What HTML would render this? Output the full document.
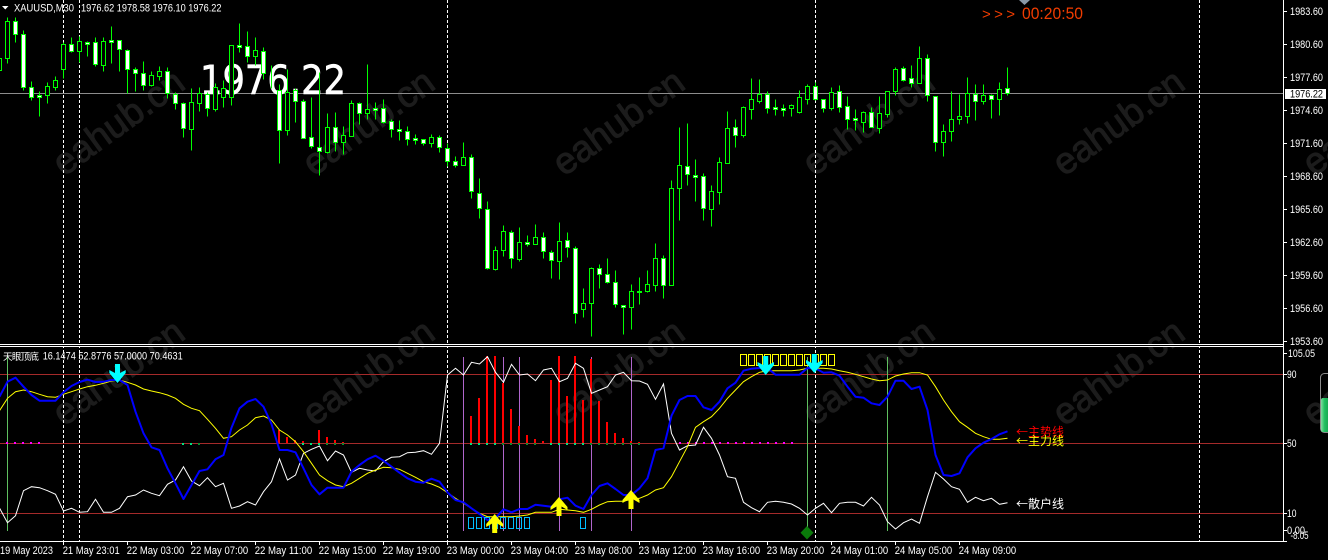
<!DOCTYPE html>
<html><head><meta charset="utf-8"><style>
html,body{margin:0;padding:0;background:#000;width:1328px;height:560px;overflow:hidden}
svg{display:block}
text{font-family:"Liberation Sans","Noto Sans CJK SC",sans-serif;fill:#fff;font-size:11px}
.wm text{font-size:37px;fill:#1c1c1c;stroke:#1c1c1c;stroke-width:1px}
.cjk{font-family:"WenQuanYi Zen Hei","Noto Sans CJK SC",sans-serif;font-size:12px}
</style></head><body>
<svg width="1328" height="560" viewBox="0 0 1328 560" xmlns="http://www.w3.org/2000/svg">
<rect width="1328" height="560" fill="#000"/>
<g class="wm">
<text transform="translate(64,177) rotate(-36)">eahub.cn</text>
<text transform="translate(314,177) rotate(-36)">eahub.cn</text>
<text transform="translate(564,177) rotate(-36)">eahub.cn</text>
<text transform="translate(814,177) rotate(-36)">eahub.cn</text>
<text transform="translate(1064,177) rotate(-36)">eahub.cn</text>
<text transform="translate(1314,177) rotate(-36)">eahub.cn</text>
<text transform="translate(64,427) rotate(-36)">eahub.cn</text>
<text transform="translate(314,427) rotate(-36)">eahub.cn</text>
<text transform="translate(564,427) rotate(-36)">eahub.cn</text>
<text transform="translate(814,427) rotate(-36)">eahub.cn</text>
<text transform="translate(1064,427) rotate(-36)">eahub.cn</text>
<text transform="translate(1314,427) rotate(-36)">eahub.cn</text>
</g>
<!-- grid -->
<path d="M63.5 0V541M79.5 0V541M447.5 0V541M815.5 0V541M1199.5 0V541" stroke="#fff" stroke-width="1" stroke-dasharray="3 2" shape-rendering="crispEdges" fill="none"/>
<path d="M0 93.5H1284" stroke="#8c8c8c" shape-rendering="crispEdges"/>
<text x="200" y="94" textLength="146" lengthAdjust="spacingAndGlyphs" style="font-family:'DejaVu Sans',sans-serif;font-size:40px;stroke:#fff;stroke-width:.6px">1976.22</text>
<!-- candles -->
<g transform="translate(0,.5)" shape-rendering="crispEdges">
<path fill="none" stroke="#0f0" d="M7.5 17V63M15.5 17V42M23.5 30V90M31.5 81V100M39.5 91V116M47.5 82V103M55.5 76V90M63.5 42V78M71.5 37V52M79.5 36V62M87.5 41V56M95.5 37V66M103.5 37V71M111.5 26V63M119.5 40V71M127.5 49V93M135.5 67V91M143.5 61V90M151.5 71V86M159.5 66V80M167.5 67V98M175.5 92V109M183.5 102V137M191.5 88V150M199.5 87V111M207.5 92V116M215.5 83V111M223.5 80V107M231.5 45V105M239.5 23V52M247.5 31V62M255.5 37V65M263.5 47V79M271.5 65V88M279.5 84V163M287.5 69V135M295.5 88V122M303.5 99V138M311.5 97V148M319.5 72V175M327.5 113V153M335.5 112V151M343.5 126V154M351.5 100V136M359.5 102V124M367.5 64V119M375.5 102V119M383.5 99V123M391.5 119V137M399.5 120V140M407.5 126V145M415.5 134V144M423.5 139V145M431.5 134V147M439.5 135V152M447.5 143V166M455.5 156V167M463.5 142V165M471.5 154V198M479.5 178V218M487.5 201V269M495.5 246V270M503.5 225V256M511.5 230V268M519.5 227V261M527.5 235V246M535.5 224V244M543.5 232V258M551.5 250V278M559.5 222V279M567.5 232V257M575.5 246V323M583.5 288V317M591.5 267V336M599.5 264V288M607.5 258V283M615.5 270V307M623.5 305V334M631.5 284V329M639.5 277V304M647.5 270V292M655.5 243V291M663.5 255V298M671.5 180V285M679.5 127V220M687.5 123V185M695.5 159V201M703.5 173V220M711.5 185V226M719.5 157V204M727.5 111V163M735.5 119V147M743.5 106V137M751.5 78V119M759.5 79V103M767.5 91V113M775.5 99V115M783.5 104V116M791.5 104V116M799.5 90V113M807.5 84V104M815.5 82V100M823.5 99V112M831.5 87V110M839.5 85V112M847.5 96V129M855.5 109V130M863.5 111V132M871.5 107V127M879.5 96V133M887.5 91V117M895.5 67V95M903.5 66V81M911.5 65V87M919.5 46V83M927.5 54V101M935.5 96V151M943.5 124V156M951.5 91V141M959.5 94V124M967.5 77V123M975.5 84V120M983.5 84V104M991.5 94V118M999.5 82V115M1007.5 67V95"/>
<path fill="#000" stroke="#0f0" d="M-2.5 58h4V70h-4zM5.5 21h4V58h-4zM45.5 86h4V95h-4zM53.5 80h4V87h-4zM61.5 44h4V69h-4zM77.5 41h4V51h-4zM101.5 41h4V65h-4zM149.5 75h4V85h-4zM157.5 71h4V76h-4zM189.5 102h4V129h-4zM197.5 93h4V103h-4zM213.5 87h4V109h-4zM221.5 88h4V97h-4zM229.5 45h4V97h-4zM253.5 50h4V56h-4zM285.5 92h4V130h-4zM325.5 127h4V152h-4zM341.5 135h4V142h-4zM349.5 103h4V136h-4zM365.5 109h4V113h-4zM429.5 137h4V143h-4zM461.5 157h4V165h-4zM493.5 250h4V269h-4zM501.5 231h4V250h-4zM517.5 242h4V259h-4zM533.5 237h4V244h-4zM557.5 241h4V261h-4zM581.5 303h4V309h-4zM589.5 268h4V303h-4zM629.5 291h4V307h-4zM645.5 284h4V291h-4zM653.5 258h4V285h-4zM669.5 188h4V285h-4zM677.5 165h4V188h-4zM709.5 191h4V209h-4zM717.5 162h4V192h-4zM725.5 128h4V163h-4zM741.5 107h4V135h-4zM749.5 99h4V109h-4zM757.5 94h4V101h-4zM789.5 105h4V108h-4zM797.5 97h4V112h-4zM805.5 86h4V99h-4zM829.5 92h4V108h-4zM861.5 112h4V122h-4zM877.5 113h4V128h-4zM885.5 91h4V114h-4zM893.5 69h4V91h-4zM917.5 58h4V83h-4zM941.5 131h4V142h-4zM949.5 119h4V131h-4zM957.5 116h4V119h-4zM965.5 93h4V116h-4zM981.5 95h4V101h-4zM997.5 89h4V99h-4z"/>
<path fill="#fff" stroke="#0f0" d="M13.5 21h4V34h-4zM21.5 34h4V87h-4zM29.5 87h4V97h-4zM37.5 95h4V97h-4zM69.5 44h4V51h-4zM85.5 42h4V44h-4zM93.5 42h4V64h-4zM109.5 40h4V42h-4zM117.5 40h4V49h-4zM125.5 50h4V69h-4zM133.5 69h4V73h-4zM141.5 73h4V85h-4zM165.5 71h4V93h-4zM173.5 94h4V103h-4zM181.5 103h4V128h-4zM205.5 94h4V108h-4zM237.5 45h4V47h-4zM245.5 46h4V56h-4zM261.5 51h4V73h-4zM277.5 90h4V130h-4zM293.5 90h4V101h-4zM301.5 101h4V138h-4zM309.5 137h4V146h-4zM317.5 147h4V151h-4zM333.5 127h4V142h-4zM357.5 103h4V113h-4zM373.5 108h4V110h-4zM381.5 108h4V122h-4zM389.5 121h4V129h-4zM397.5 129h4V131h-4zM405.5 131h4V139h-4zM413.5 138h4V140h-4zM421.5 139h4V143h-4zM437.5 137h4V147h-4zM445.5 148h4V161h-4zM453.5 161h4V165h-4zM469.5 157h4V191h-4zM477.5 193h4V208h-4zM485.5 209h4V268h-4zM509.5 232h4V258h-4zM525.5 242h4V244h-4zM541.5 237h4V251h-4zM549.5 252h4V260h-4zM565.5 240h4V247h-4zM573.5 248h4V313h-4zM597.5 268h4V274h-4zM605.5 274h4V282h-4zM613.5 282h4V304h-4zM621.5 305h4V307h-4zM637.5 291h4V292h-4zM661.5 258h4V285h-4zM685.5 166h4V174h-4zM693.5 175h4V177h-4zM701.5 176h4V208h-4zM733.5 127h4V135h-4zM765.5 94h4V108h-4zM773.5 107h4V109h-4zM781.5 108h4V110h-4zM813.5 86h4V99h-4zM821.5 99h4V108h-4zM837.5 91h4V107h-4zM845.5 106h4V119h-4zM853.5 118h4V120h-4zM869.5 112h4V127h-4zM901.5 68h4V80h-4zM909.5 78h4V83h-4zM925.5 58h4V95h-4zM933.5 96h4V142h-4zM973.5 94h4V101h-4zM989.5 95h4V99h-4zM1005.5 88h4V93h-4z"/>
</g>
<!-- indicator base -->
<rect x="0" y="345" width="1284" height="1" fill="#000"/>
<path d="M0 374.5H1284M0 443.5H1284M0 513.5H1284" stroke="#a52a2a" shape-rendering="crispEdges"/>
<path d="M463.5 357V531M503.5 357V531M519.5 357V531M559.5 357V531M591.5 357V531M631.5 357V531" stroke="#b066cc" shape-rendering="crispEdges"/>
<path d="M7.5 357V531M807.5 357V531M887.5 357V531" stroke="#5fc05f" shape-rendering="crispEdges"/>
<!-- histogram -->
<g fill="#f00" shape-rendering="crispEdges">
<rect x="278" y="430" width="2" height="13"/><rect x="286" y="437" width="2" height="6"/><rect x="294" y="440" width="2" height="3"/><rect x="302" y="441" width="2" height="2"/><rect x="318" y="430" width="2" height="13"/><rect x="326" y="437" width="2" height="6"/><rect x="334" y="440" width="2" height="3"/><rect x="342" y="442" width="2" height="1"/>
<rect x="470" y="416" width="2" height="27"/><rect x="478" y="398" width="2" height="45"/><rect x="486" y="356" width="2" height="87"/><rect x="494" y="356" width="2" height="87"/><rect x="502" y="383" width="2" height="60"/><rect x="510" y="409" width="2" height="34"/><rect x="518" y="426" width="2" height="17"/><rect x="526" y="435" width="2" height="8"/><rect x="534" y="439" width="2" height="4"/><rect x="542" y="441" width="2" height="2"/><rect x="550" y="380" width="2" height="63"/><rect x="558" y="356" width="2" height="87"/><rect x="566" y="396" width="2" height="47"/><rect x="574" y="356" width="2" height="87"/><rect x="582" y="400" width="2" height="43"/><rect x="590" y="359" width="2" height="84"/><rect x="598" y="401" width="2" height="42"/><rect x="606" y="422" width="2" height="21"/><rect x="614" y="433" width="2" height="10"/><rect x="622" y="438" width="2" height="5"/><rect x="630" y="441" width="2" height="2"/><rect x="638" y="442" width="2" height="1"/>
</g>
<!-- dots -->
<path d="M6 443h2M14 443h2M22 443h2M30 443h2M38 443h2M679 443h2M687 443h2M695 443h2M703 443h2M711 443h2M719 443h2M727 443h2M735 443h2M743 443h2M751 443h2M759 443h2M767 443h2M775 443h2M783 443h2M791 443h2" stroke="#f0f" stroke-width="2" shape-rendering="crispEdges"/>
<path d="M182 444h2M190 444h2M302 444h2M310 444h2M318 444h2M470 444h2M478 444h2M486 444h2M494 444h2M550 444h2M558 444h2M566 444h2M574 444h2M582 444h2" stroke="#00e080" stroke-width="2" shape-rendering="crispEdges"/>
<path d="M198 444h2M326 444h2M334 444h2M342 444h2M502 444h2M510 444h2M518 444h2M526 444h2M534 444h2M590 444h2M598 444h2M606 444h2M614 444h2M622 444h2M630 444h2M638 444h2" stroke="#0a8a30" stroke-width="2" shape-rendering="crispEdges"/>
<!-- white line -->
<polyline fill="none" stroke="#fff" stroke-width="1" points="-0.5,508 7.5,522.7 15.5,515.7 23.5,490.7 31.5,486.7 39.5,487.7 47.5,490.7 55.5,494.3 63.5,511 71.5,508.3 79.5,512.3 87.5,511.7 95.5,499.3 103.5,512.3 111.5,512.3 119.5,508.3 127.5,496.7 135.5,495 143.5,490 151.5,493.3 159.5,495.7 167.5,484.3 175.5,480 183.5,466.7 191.5,481 199.5,485.7 207.5,477.7 215.5,486.7 223.5,483.3 231.5,508.3 239.5,506 247.5,501.7 255.5,505 263.5,491.7 271.5,481.7 279.5,459 287.5,480 295.5,475 303.5,453.3 311.5,449.3 319.5,446 327.5,460.7 335.5,451 343.5,455 351.5,472.3 359.5,468.3 367.5,470 375.5,471 383.5,461.7 391.5,457.3 399.5,456.7 407.5,452.7 415.5,452.3 423.5,450.7 431.5,454.3 439.5,443.3 447.5,375 455.5,368.3 463.5,375 471.5,362.3 479.5,364 487.5,356.7 495.5,372.3 503.5,382.3 511.5,364.3 519.5,375 527.5,374 535.5,380.7 543.5,370 551.5,368.3 559.5,381.7 567.5,378.3 575.5,363.3 583.5,368.3 591.5,393.3 599.5,390 607.5,386.7 615.5,375 623.5,372.3 631.5,380.7 639.5,381 647.5,384.3 655.5,399.3 663.5,384 671.5,433.3 679.5,450 687.5,445.7 695.5,445 703.5,427.3 711.5,438.3 719.5,455 727.5,476.7 735.5,478.3 743.5,502.3 751.5,507.7 759.5,511.7 767.5,502.3 775.5,501.3 783.5,502.3 791.5,504 799.5,508.3 807.5,515 815.5,508.3 823.5,503.3 831.5,512.7 839.5,503.3 847.5,502.3 855.5,502.3 863.5,506 871.5,497.3 879.5,505 887.5,521.7 895.5,529 903.5,522.7 911.5,519 919.5,523.3 927.5,496.7 935.5,472.3 943.5,479 951.5,486.7 959.5,489.3 967.5,502.3 975.5,497.3 983.5,500.7 991.5,498.3 999.5,504.3 1007.5,502.7"/>
<!-- yellow line -->
<polyline fill="none" stroke="#ff0" stroke-width="1" points="-0.5,410.7 7.5,398.3 15.5,391.7 23.5,390 31.5,391.7 39.5,394.3 47.5,396.7 55.5,397.3 63.5,394.3 71.5,391.7 79.5,389 87.5,386.7 95.5,385.3 103.5,383.3 111.5,381 119.5,380 127.5,382.3 135.5,385 143.5,389 151.5,391 159.5,392.7 167.5,395 175.5,398.3 183.5,404.3 191.5,408.3 199.5,410.7 207.5,419.3 215.5,428.3 223.5,438.3 231.5,436.7 239.5,430 247.5,425 255.5,417.7 263.5,416 271.5,420 279.5,430 287.5,435 295.5,441.7 303.5,451.7 311.5,463.3 319.5,475 327.5,480.7 335.5,485 343.5,486.7 351.5,483.3 359.5,478.3 367.5,473.3 375.5,470 383.5,467.3 391.5,467.7 399.5,469.3 407.5,473.3 415.5,477.3 423.5,481.7 431.5,484 439.5,487.3 447.5,492.7 455.5,498.3 463.5,503.3 471.5,508.3 479.5,513.3 487.5,516.7 495.5,516.7 503.5,516.7 511.5,516.7 519.5,516 527.5,515 535.5,512.3 543.5,512.3 551.5,512.3 559.5,509.3 567.5,510 575.5,510.7 583.5,512.3 591.5,509.3 599.5,505 607.5,501.7 615.5,501.3 623.5,501.3 631.5,499.3 639.5,498.3 647.5,495 655.5,490 663.5,487.7 671.5,476.7 679.5,461.7 687.5,446.7 695.5,427.3 703.5,421.7 711.5,416.7 719.5,408.3 727.5,398.3 735.5,390 743.5,381.7 751.5,376.7 759.5,372.3 767.5,370.7 775.5,370.7 783.5,370.7 791.5,370.7 799.5,370 807.5,368.3 815.5,368.3 823.5,368.3 831.5,369 839.5,370.7 847.5,372.3 855.5,374.3 863.5,376.7 871.5,379 879.5,380.7 887.5,380 895.5,376 903.5,374 911.5,372.7 919.5,372.7 927.5,375 935.5,386.7 943.5,400 951.5,411.7 959.5,421.7 967.5,427.3 975.5,433.3 983.5,436.7 991.5,439.3 999.5,439.3 1007.5,438.3"/>
<!-- blue line -->
<polyline fill="none" stroke="#00f" stroke-width="2" stroke-linejoin="round" points="-0.5,396.7 7.5,381.7 15.5,377.7 23.5,386.7 31.5,395 39.5,400.7 47.5,400.7 55.5,400.7 63.5,392.3 71.5,386 79.5,382 87.5,379.7 95.5,382 103.5,381.7 111.5,380 119.5,380 127.5,385 135.5,411.7 143.5,433.3 151.5,447.3 159.5,450 167.5,468.3 175.5,483.3 183.5,499 191.5,485 199.5,471 207.5,469.3 215.5,459.3 223.5,455 231.5,427.7 239.5,408.3 247.5,401.7 255.5,399 263.5,406.7 271.5,424 279.5,450 287.5,450 295.5,452.3 303.5,468.3 311.5,485 319.5,494.3 327.5,487.7 335.5,487.7 343.5,487.7 351.5,471.7 359.5,465 367.5,459.3 375.5,455.7 383.5,460.7 391.5,466.7 399.5,472.7 407.5,478.3 415.5,481.7 423.5,482.7 431.5,478.7 439.5,481.7 447.5,492.3 455.5,500 463.5,502.3 471.5,508.3 479.5,514 487.5,520 495.5,518 503.5,509.3 511.5,512.3 519.5,509 527.5,509 535.5,504.7 543.5,505.7 551.5,506.7 559.5,499.3 567.5,497.7 575.5,505.7 583.5,509 591.5,495 599.5,486 607.5,483.3 615.5,489 623.5,495 631.5,495 639.5,488.3 647.5,478.3 655.5,450 663.5,448.3 671.5,415.7 679.5,400 687.5,396 695.5,396 703.5,407.3 711.5,410 719.5,401.7 727.5,388.3 735.5,382.7 743.5,370.7 751.5,368.7 759.5,368 767.5,368 775.5,374.7 783.5,374.7 791.5,374.7 799.5,374.7 807.5,368 815.5,368.3 823.5,372.7 831.5,372.3 839.5,375.7 847.5,386.7 855.5,396.7 863.5,397.7 871.5,403.3 879.5,405 887.5,396.7 895.5,380.7 903.5,380.7 911.5,389 919.5,386.7 927.5,410 935.5,455 943.5,475 951.5,476 959.5,473.3 967.5,457.3 975.5,448.3 983.5,442.7 991.5,439 999.5,434.3 1007.5,431.3"/>
<!-- tofu boxes -->
<g fill="none" stroke="#ff0" stroke-width="1.2" shape-rendering="crispEdges">
<rect x="740.5" y="354.5" width="6" height="11"/><rect x="748.5" y="354.5" width="6" height="11"/><rect x="756.5" y="354.5" width="6" height="11"/><rect x="764.5" y="354.5" width="6" height="11"/><rect x="772.5" y="354.5" width="6" height="11"/><rect x="780.5" y="354.5" width="6" height="11"/><rect x="788.5" y="354.5" width="6" height="11"/><rect x="796.5" y="354.5" width="6" height="11"/><rect x="804.5" y="354.5" width="6" height="11"/><rect x="812.5" y="354.5" width="6" height="11"/><rect x="820.5" y="354.5" width="6" height="11"/><rect x="828.5" y="354.5" width="6" height="11"/>
</g>
<g fill="none" stroke="#00bfff" stroke-width="1.2" shape-rendering="crispEdges">
<rect x="468.5" y="517.5" width="5" height="11"/><rect x="476.5" y="517.5" width="5" height="11"/><rect x="484.5" y="517.5" width="5" height="11"/><rect x="492.5" y="517.5" width="5" height="11"/><rect x="500.5" y="517.5" width="5" height="11"/><rect x="508.5" y="517.5" width="5" height="11"/><rect x="516.5" y="517.5" width="5" height="11"/><rect x="524.5" y="517.5" width="5" height="11"/><rect x="580.5" y="517.5" width="5" height="11"/>
</g>
<!-- arrows -->
<g fill="#0ff">
<polygon points="115,364 120,364 120,373 125.7,370 125.7,373 117.5,383 109.3,373 109.3,370 115,373"/>
<polygon points="763.2,356 768.2,356 768.2,365 774,362 774,365 765.7,375 757.5,365 757.5,362 763.2,365"/>
<polygon points="811.8,354 816.8,354 816.8,363 822.6,360 822.6,363 814.3,373 806,363 806,360 811.8,363"/>
</g>
<g fill="#ff0">
<polygon points="494.7,514 503.2,524 503.2,527 497.2,523.5 497.2,533 492.2,533 492.2,523.5 486.2,527 486.2,524"/>
<polygon points="559,497 567.5,507 567.5,510 561.5,506.5 561.5,516 556.5,516 556.5,506.5 550.5,510 550.5,507"/>
<polygon points="631,490 639.5,500 639.5,503 633.5,499.5 633.5,509 628.5,509 628.5,499.5 622.5,503 622.5,500"/>
</g>
<polygon points="807,526 813.5,532.7 807,539.5 800.5,532.7" fill="#0a7a0a"/>
<!-- frame -->
<g fill="#fff" shape-rendering="crispEdges">
<rect x="0" y="344" width="1284" height="1"/><rect x="0" y="346" width="1284" height="1"/><rect x="0" y="541" width="1284" height="1"/><rect x="1283" y="0" width="1" height="542"/>
<rect x="1284" y="11" width="3" height="1"/><rect x="1284" y="44" width="3" height="1"/><rect x="1284" y="77" width="3" height="1"/><rect x="1284" y="110" width="3" height="1"/><rect x="1284" y="143" width="3" height="1"/><rect x="1284" y="176" width="3" height="1"/><rect x="1284" y="209" width="3" height="1"/><rect x="1284" y="242" width="3" height="1"/><rect x="1284" y="275" width="3" height="1"/><rect x="1284" y="308" width="3" height="1"/><rect x="1284" y="341" width="3" height="1"/><rect x="1284" y="353" width="3" height="1"/><rect x="1284" y="374" width="3" height="1"/><rect x="1284" y="443" width="3" height="1"/><rect x="1284" y="513" width="3" height="1"/><rect x="1284" y="530" width="3" height="1"/><rect x="1284" y="541" width="3" height="1"/>
<rect x="63" y="542" width="1" height="3"/><rect x="127" y="542" width="1" height="3"/><rect x="191" y="542" width="1" height="3"/><rect x="255" y="542" width="1" height="3"/><rect x="319" y="542" width="1" height="3"/><rect x="383" y="542" width="1" height="3"/><rect x="447" y="542" width="1" height="3"/><rect x="511" y="542" width="1" height="3"/><rect x="575" y="542" width="1" height="3"/><rect x="639" y="542" width="1" height="3"/><rect x="703" y="542" width="1" height="3"/><rect x="767" y="542" width="1" height="3"/><rect x="831" y="542" width="1" height="3"/><rect x="895" y="542" width="1" height="3"/><rect x="959" y="542" width="1" height="3"/>
</g>
<!-- top-left -->
<polygon points="2,6 8.5,6 5.25,9.5" fill="#fff"/>
<text x="14" y="11.5" textLength="60" lengthAdjust="spacingAndGlyphs">XAUUSD,M30</text>
<text x="81" y="11.5" textLength="140.5" lengthAdjust="spacingAndGlyphs">1976.62 1978.58 1976.10 1976.22</text>
<!-- timer -->
<polygon points="1019,0 1030,0 1024.5,5" fill="#8a9aa8"/>
<text x="982" y="19" textLength="33" style="fill:#f03c00;font-size:15px">&gt;&gt;&gt;</text>
<text x="1022" y="19" textLength="61" lengthAdjust="spacingAndGlyphs" style="fill:#f03c00;font-size:16.5px">00:20:50</text>
<!-- price axis -->
<g>
<text x="1290" y="15" textLength="33" lengthAdjust="spacingAndGlyphs">1983.60</text>
<text x="1290" y="48" textLength="33" lengthAdjust="spacingAndGlyphs">1980.60</text>
<text x="1290" y="81" textLength="33" lengthAdjust="spacingAndGlyphs">1977.60</text>
<text x="1290" y="114" textLength="33" lengthAdjust="spacingAndGlyphs">1974.60</text>
<text x="1290" y="147" textLength="33" lengthAdjust="spacingAndGlyphs">1971.60</text>
<text x="1290" y="180" textLength="33" lengthAdjust="spacingAndGlyphs">1968.60</text>
<text x="1290" y="213" textLength="33" lengthAdjust="spacingAndGlyphs">1965.60</text>
<text x="1290" y="246" textLength="33" lengthAdjust="spacingAndGlyphs">1962.60</text>
<text x="1290" y="279" textLength="33" lengthAdjust="spacingAndGlyphs">1959.60</text>
<text x="1290" y="312" textLength="33" lengthAdjust="spacingAndGlyphs">1956.60</text>
<text x="1290" y="345" textLength="33" lengthAdjust="spacingAndGlyphs">1953.60</text>
<rect x="1285" y="89" width="41" height="10" fill="#fff"/>
<text x="1290" y="97.5" textLength="33" lengthAdjust="spacingAndGlyphs" style="fill:#000">1976.22</text>
<text x="1288" y="357" textLength="27" lengthAdjust="spacingAndGlyphs">105.05</text>
<text x="1287" y="378" textLength="9.5" lengthAdjust="spacingAndGlyphs">90</text>
<text x="1287" y="447" textLength="9.5" lengthAdjust="spacingAndGlyphs">50</text>
<text x="1287" y="517" textLength="9.5" lengthAdjust="spacingAndGlyphs">10</text>
<text x="1287" y="534" textLength="18" lengthAdjust="spacingAndGlyphs">0.00</text>
<text x="1290.5" y="539" textLength="18" lengthAdjust="spacingAndGlyphs">-8.05</text>
</g>
<!-- slider -->
<rect x="1320.5" y="373.5" width="12" height="59" rx="4" fill="none" stroke="#8a8a8a"/>
<defs><linearGradient id="sg" x1="0" x2="1" y1="0" y2="0"><stop offset="0" stop-color="#7fdc9f"/><stop offset=".4" stop-color="#20c060"/><stop offset="1" stop-color="#189a4c"/></linearGradient></defs>
<rect x="1321" y="398" width="9" height="34" rx="2" fill="url(#sg)"/>
<!-- indicator header -->
<text class="cjk" x="3" y="360" textLength="36" style="font-size:9.5px">天眼顶底</text>
<text x="42.7" y="359.5" textLength="140" lengthAdjust="spacingAndGlyphs">16.1474 52.8776 57.0000 70.4631</text>
<!-- line labels -->
<text class="cjk" x="1016" y="436" style="fill:#f00">←主势线</text>
<text class="cjk" x="1016" y="445" style="fill:#ff0">←主力线</text>
<text class="cjk" x="1016" y="508" style="fill:#fff">←散户线</text>
<!-- time axis -->
<g>
<text x="0" y="554" textLength="53" lengthAdjust="spacingAndGlyphs">19 May 2023</text>
<text x="62.7" y="554" textLength="57" lengthAdjust="spacingAndGlyphs">21 May 23:01</text>
<text x="126.7" y="554" textLength="57.5" lengthAdjust="spacingAndGlyphs">22 May 03:00</text>
<text x="190.7" y="554" textLength="57.5" lengthAdjust="spacingAndGlyphs">22 May 07:00</text>
<text x="254.7" y="554" textLength="57.5" lengthAdjust="spacingAndGlyphs">22 May 11:00</text>
<text x="318.7" y="554" textLength="57.5" lengthAdjust="spacingAndGlyphs">22 May 15:00</text>
<text x="382.7" y="554" textLength="57.5" lengthAdjust="spacingAndGlyphs">22 May 19:00</text>
<text x="446.7" y="554" textLength="57.5" lengthAdjust="spacingAndGlyphs">23 May 00:00</text>
<text x="510.7" y="554" textLength="57.5" lengthAdjust="spacingAndGlyphs">23 May 04:00</text>
<text x="574.7" y="554" textLength="57.5" lengthAdjust="spacingAndGlyphs">23 May 08:00</text>
<text x="638.7" y="554" textLength="57.5" lengthAdjust="spacingAndGlyphs">23 May 12:00</text>
<text x="702.7" y="554" textLength="57.5" lengthAdjust="spacingAndGlyphs">23 May 16:00</text>
<text x="766.7" y="554" textLength="57.5" lengthAdjust="spacingAndGlyphs">23 May 20:00</text>
<text x="830.7" y="554" textLength="57.5" lengthAdjust="spacingAndGlyphs">24 May 01:00</text>
<text x="894.7" y="554" textLength="57.5" lengthAdjust="spacingAndGlyphs">24 May 05:00</text>
<text x="958.7" y="554" textLength="57.5" lengthAdjust="spacingAndGlyphs">24 May 09:00</text>
</g>
</svg>
</body></html>
